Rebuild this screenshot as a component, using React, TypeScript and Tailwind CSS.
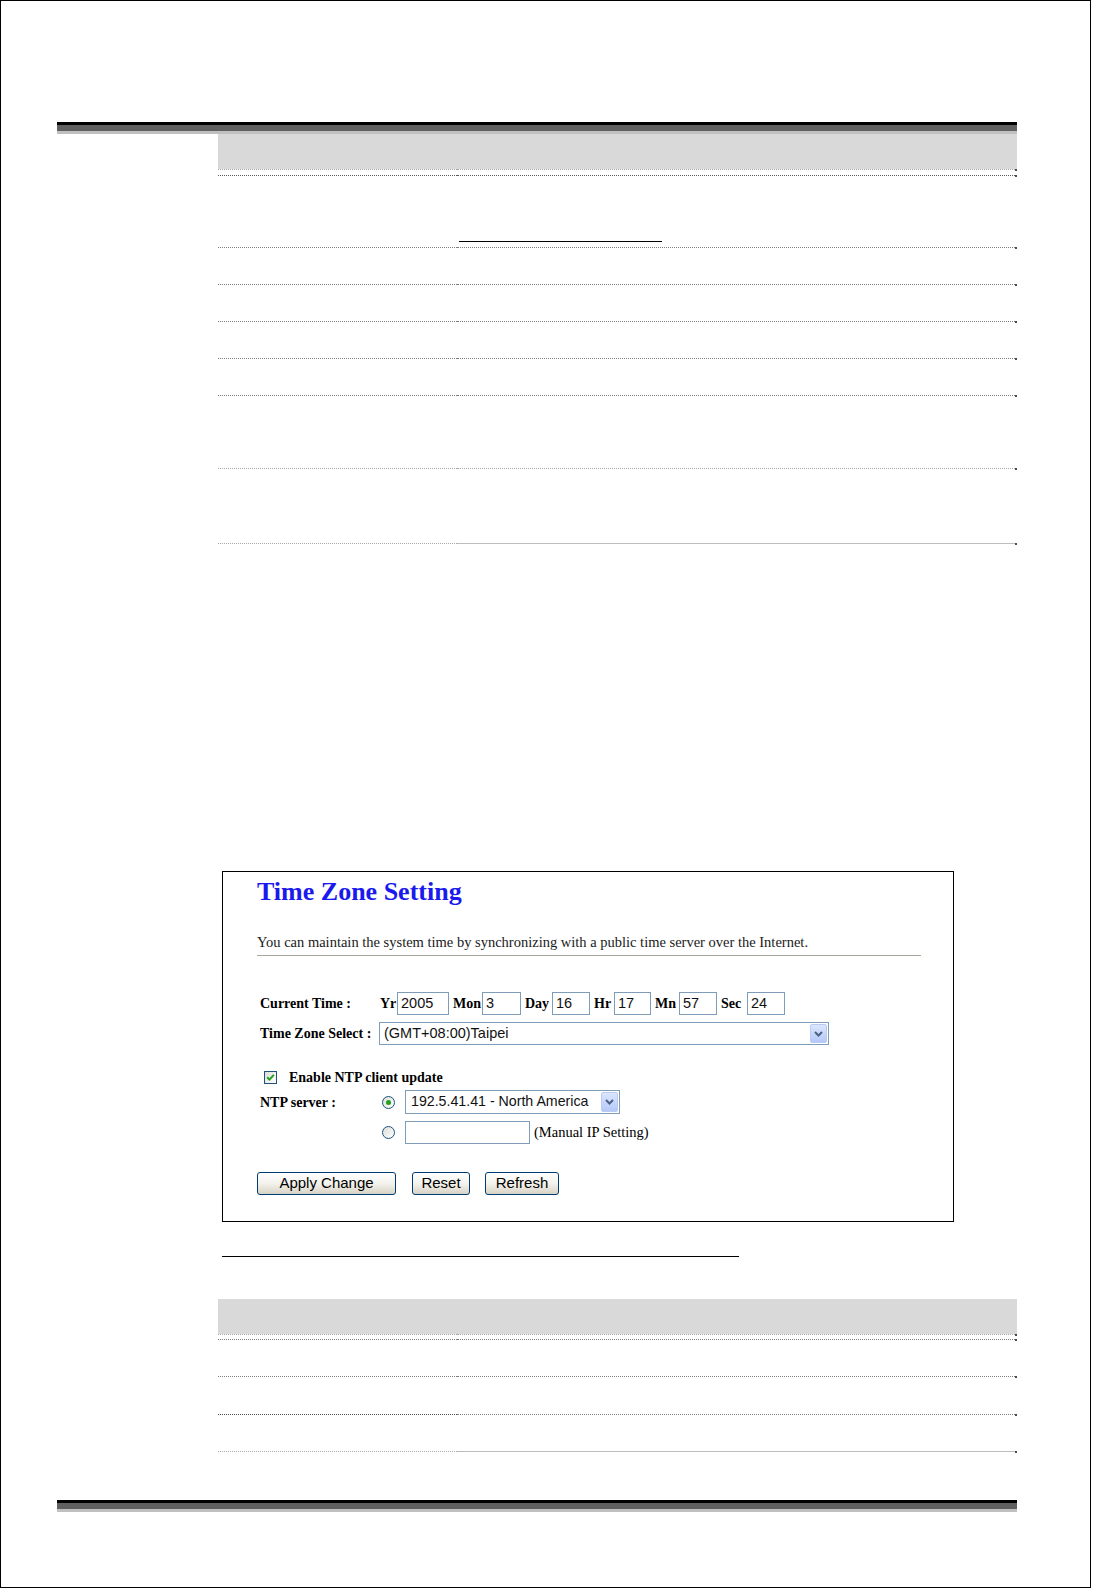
import React from 'react';

const serif = "font-['Liberation_Serif',serif]";
const sans = "font-['Liberation_Sans',Arial,sans-serif]";

type LineProps = { tone?: 'light' | 'mid' | 'dark'; last?: boolean; heavyLeft?: boolean };

// dotted table border with the little tick word leaves at the right end
const Line = ({ tone = 'mid', last = false, heavyLeft = false }: LineProps) => {
  const color =
    tone === 'light' ? 'border-[#a6a6a6]' : tone === 'dark' ? 'border-[#595959]' : 'border-[#7d7d7d]';
  return (
    <div className="flex h-px items-start">
      <div
        className={`w-[239px] border-t ${
          heavyLeft ? 'border-dotted border-[#4f4f4f]' : last ? 'border-dotted border-[#a8a8a8]' : `border-dotted ${color}`
        }`}
      />
      <div className={`flex-1 border-t ${last ? 'border-solid border-[#bdbdbd]' : `border-dotted ${color}`}`} />
      <div className="h-[2px] w-[2px] bg-[#4a4a4a]" />
    </div>
  );
};

const Rule = () => (
  <div className="ml-[56px] w-[960px]">
    <div className="h-[3px] bg-black" />
    <div className="h-[6px] bg-[#606060]" />
    <div className="h-[3px] bg-[#c0c0c0]" />
  </div>
);

const Field = ({ value, w }: { value: string; w: string }) => (
  <div className={`flex h-[23px] items-center border border-[#7f9db9] bg-white px-[3px] text-[14.5px] text-[#111] ${sans} ${w}`}>
    {value}
  </div>
);

const Arrow = () => (
  <span className="flex h-full w-[17px] items-center justify-center rounded-[2px] border border-[#b9cbf3] bg-linear-to-b from-[#dbe6fe] to-[#b4c9f8]">
    <svg width="9" height="6" viewBox="0 0 9 6">
      <path d="M1 1 L4.5 4.5 L8 1" stroke="#4d6185" strokeWidth="2" fill="none" />
    </svg>
  </span>
);

const Radio = ({ checked = false }: { checked?: boolean }) => (
  <span className="flex h-[13px] w-[13px] items-center justify-center rounded-full border border-[#1c5180] bg-linear-to-br from-[#dcdcd7] to-white">
    {checked && <span className="h-[5px] w-[5px] rounded-full bg-[#21a121]" />}
  </span>
);

const XpButton = ({ label, w }: { label: string; w: string }) => (
  <button
    className={`flex h-[23px] items-center justify-center rounded-[3px] border border-[#003c74] bg-linear-to-b from-white via-[#f3f2ec] to-[#d8d3c6] text-[15px] text-black ${sans} ${w}`}
  >
    {label}
  </button>
);

const TimeZoneSetting = () => {
  const label = `font-bold text-[14px] text-black ${serif}`;
  return (
    <div className="ml-[4px] h-[351px] w-[732px] border border-black bg-white pl-[34px] pt-[5px]">
      <h1 className={`text-[26px] font-bold leading-[30px] text-[#1a1aee] ${serif}`}>Time Zone Setting</h1>
      <p className={`mt-[26px] text-[14.5px] leading-[18px] text-[#1a1a1a] ${serif}`}>
        You can maintain the system time by synchronizing with a public time server over the Internet.
      </p>
      <div className="mt-[4px] h-px w-[664px] bg-[#a9a89c]" />

      {/* current time */}
      <div className="mt-[36px] flex h-[23px] items-center pl-[3px]">
        <span className={`w-[118px] ${label}`}>Current Time :</span>
        <span className={`w-[19px] pl-[2px] ${label}`}>Yr</span>
        <Field value="2005" w="w-[52px]" />
        <span className={`w-[33px] pl-[4px] ${label}`}>Mon</span>
        <Field value="3" w="w-[39px]" />
        <span className={`w-[31px] pl-[4px] ${label}`}>Day</span>
        <Field value="16" w="w-[38px]" />
        <span className={`w-[24px] pl-[4px] ${label}`}>Hr</span>
        <Field value="17" w="w-[37px]" />
        <span className={`w-[28px] pl-[4px] ${label}`}>Mn</span>
        <Field value="57" w="w-[38px]" />
        <span className={`w-[30px] pl-[4px] ${label}`}>Sec</span>
        <Field value="24" w="w-[38px]" />
      </div>

      <div className="mt-[7px] flex h-[23px] items-center pl-[3px]">
        <span className={`w-[118px] ${label}`}>Time Zone Select :</span>
        <div className={`ml-[1px] flex h-[23px] w-[450px] items-center justify-between border border-[#7f9db9] bg-white p-px pl-[4px] text-[14.5px] text-[#111] ${sans}`}>
          <span>(GMT+08:00)Taipei</span>
          <Arrow />
        </div>
      </div>

      <div className="mt-[22px] flex h-[20px] items-center pl-[3px]">
        <span className="ml-[4px] flex h-[13px] w-[13px] items-center justify-center border border-[#1c5180] bg-linear-to-br from-[#dcdcd7] to-white">
          <svg width="9" height="9" viewBox="0 0 9 9">
            <path d="M1.2 4.2 L3.5 6.6 L7.8 1.8" stroke="#21a121" strokeWidth="2" fill="none" />
          </svg>
        </span>
        <span className={`ml-[12px] ${label}`}>Enable NTP client update</span>
      </div>

      <div className="mt-[3px] flex h-[24px] items-center pl-[3px]">
        <span className={`w-[118px] ${label}`}>NTP server :</span>
        <span className="ml-[4px]">
          <Radio checked />
        </span>
        <div className={`ml-[10px] flex h-[24px] w-[215px] items-center justify-between border border-[#7f9db9] bg-white p-px pl-[5px] text-[14.2px] text-[#111] ${sans}`}>
          <span>192.5.41.41 - North America</span>
          <Arrow />
        </div>
      </div>

      <div className="mt-[7px] flex h-[23px] items-center pl-[3px]">
        <span className="w-[118px]" />
        <span className="ml-[4px]">
          <Radio />
        </span>
        <div className="ml-[10px] h-[23px] w-[125px] border border-[#7f9db9] bg-white" />
        <span className={`ml-[4px] text-[14.5px] text-black ${serif}`}>(Manual IP Setting)</span>
      </div>

      <div className="mt-[28px] flex items-center">
        <XpButton label="Apply Change" w="w-[139px]" />
        <span className="ml-[16px]">
          <XpButton label="Reset" w="w-[58px]" />
        </span>
        <span className="ml-[15px]">
          <XpButton label="Refresh" w="w-[74px]" />
        </span>
      </div>
    </div>
  );
};

export default function App() {
  return (
    <div className="h-[1588px] w-[1091px] border border-black bg-white pt-[121px]">
      <Rule />

      <div className="ml-[217px] w-[799px]">
        {/* table header */}
        <div className="h-[35px] bg-[#d9d9d9]" />
        <Line tone="light" />
        <div className="h-[5px]" />
        <Line tone="dark" />
        <div className="h-[71px] pl-[241px] pt-[65px]">
          <div className="h-px w-[203px] bg-black" />
        </div>
        <Line />
        <div className="h-[36px]" />
        <Line />
        <div className="h-[36px]" />
        <Line />
        <div className="h-[36px]" />
        <Line />
        <div className="h-[36px]" />
        <Line />
        <div className="h-[72px]" />
        <Line tone="light" />
        <div className="h-[74px]" />
        <Line last />

        <div className="h-[327px]" />
        <TimeZoneSetting />

        {/* figure caption */}
        <div className="ml-[4px] mt-[34px] h-px w-[517px] bg-black" />

        <div className="mt-[42px] h-[35px] bg-[#d9d9d9]" />
        <Line tone="light" />
        <div className="h-[4px]" />
        <Line />
        <div className="h-[36px]" />
        <Line />
        <div className="h-[37px]" />
        <Line heavyLeft />
        <div className="h-[36px]" />
        <Line last />
      </div>

      <div className="h-[48px]" />
      <Rule />
    </div>
  );
}
